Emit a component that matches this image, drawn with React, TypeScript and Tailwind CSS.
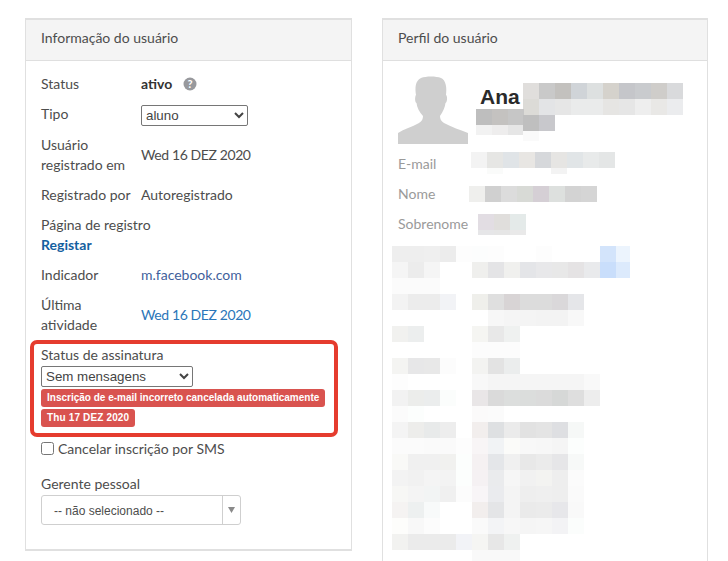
import type { ReactNode } from 'react';

type PixRow = { x: number; y: number; h?: number; w?: number; c: string[] };

// blurred-out user data, drawn as blocks of 16px
function Pix({ rows, width, height, className }: { rows: PixRow[]; width: number; height: number; className?: string }) {
  return (
    <svg width={width} height={height} className={className} shapeRendering="crispEdges">
      {rows.map((r, i) =>
        r.c.map((c, j) =>
          c ? <rect key={`${i}-${j}`} x={r.x + j * (r.w ?? 16)} y={r.y} width={r.w ?? 16} height={r.h ?? 16} fill={c} /> : null,
        ),
      )}
    </svg>
  );
}

const nameRows: PixRow[] = [
  { x: 47, y: 0, c: ['#e0dedc', '#c9c9c9', '#c3c1be', '#d0d4d8', '#dde0e0', '#d5d2cc', '#c5c6ca', '#c9cbce', '#cfcdca', '#d9dadc'] },
  { x: 47, y: 16, c: ['#dcdbd7', '#e3e4e6', '#e6e6e6', '#eaebeb', '#eaebeb', '#e6e5e3', '#e6e6e6', '#eeeeee', '#e9e8e6', '#ebecee'] },
  { x: 0, y: 26, c: ['#bebebe', '#c4c2c0', '#c6c6c6'] },
  { x: 0, y: 42, h: 10, c: ['#f2f2f2', '#eeeded', '#e6e6e6'] },
  { x: 47, y: 32, c: ['#bfbfbf', '#c8c8cc'] },
  { x: 47, y: 48, h: 10, c: ['#fafafa'] },
];

const lowerRows: PixRow[] = [
  { x: 0, y: 0, c: ['#eeeeee', '#eeeeee', '#efefef', '#ececec', '#fdfdfd', '#fcfdfd', '#fdfdfd', '', '', '#fdfdfd', '', '', '', '#d3e4fb', '#ecf4fd'] },
  { x: 0, y: 16, c: ['#f5f5f5', '#ececec', '#f5f5f5', '', '', '#efefed', '#e4e4e6', '#f0f0ee', '#e4e5e8', '#e8e8ea', '#e8e8e8', '#e5e3e4', '#e9eaec', '#c9defb', '#dceafc'] },
  { x: 0, y: 32, c: ['#fbfbfb', '#fbfbfb', '#fbfbfb'] },
  { x: 0, y: 48, c: ['#f3f3f3', '#ececec', '#ececec', '#f2f3f6', '', '#efefeb', '#dfdfdf', '#d8d4d5', '#dcdcdc', '#dcdcdc', '#dad8da', '#e5e6e9'] },
  { x: 0, y: 64, c: ['', '', '', '', '', '', '#f7f7f7', '#f5f5f5', '#f4f4f4', '#f3f3f3', '#f3f3f3', '#f8f8f8'] },
  { x: 0, y: 80, c: ['#f1f1ef', '#eceeee', '', '', '', '#f5f5f2', '#e8e8e8', '#eff1f0'] },
  { x: 0, y: 96, c: ['', '', '', '', '', '#fcfcfc', '#fcfcfc', '#fcfcfc'] },
  { x: 0, y: 112, c: ['#f4f4f2', '#e7e7e8', '#e8e8e8', '#fcfcfc', '', '#f3f3f1', '#e3e3e3', '#ebeded'] },
  { x: 0, y: 128, c: ['#fdfdfd', '', '', '', '', '#f8f8f8', '#f5f5f5', '#f5f5f5', '#f5f5f5', '#f5f5f5', '#f5f5f5', '#f5f5f5', '#f9f9f9'] },
  { x: 0, y: 144, c: ['#f2f2f2', '#ecedeb', '#ebeded', '#fbfdfc', '', '#e9e6e7', '#dadada', '#dcdedd', '#dbdddc', '#dbdbdb', '#d6d8d7', '#dedede', '#ededed'] },
  { x: 0, y: 160, c: ['#fbfbfb', '#fcfefd', '', '', '', '#fbfafa', '#fbfbfb'] },
  { x: 0, y: 176, c: ['#f4f4f4', '#ededeb', '#e8eaea', '#ededed', '', '#f2eeed', '#dee0e2', '#ebebeb', '#e2e2e2', '#e4e4e4', '#dedfe2', '#f6f8f7'] },
  { x: 0, y: 192, c: ['#fbfbfb', '#fbfbfb', '#fafafa', '#fafafa', '#fdfdfd', '#f8f5f6', '#f1f3f5', '#fbfbf9', '#f8f8f8', '#f7f7f7', '#f5f5f5', '#fcfefd'] },
  { x: 0, y: 208, c: ['#f9f9f7', '#f0f0f0', '#f0f0f0', '#f1f1ef', '#fcfefd', '#f5f1f2', '#e4e6e9', '#f0f0f0', '#e8e8e8', '#ebebeb', '#e6e6e8', '#f7f9f8'] },
  { x: 0, y: 224, c: ['#f3f3f3', '#f1f1f1', '#f4f4f4', '#f3f3f3', '#fcfefd', '#f5f1f3', '#eaebed', '#f6f6f6', '#f1f1f1', '#f3f3f1', '#eeeeee', '#fbfbfb'] },
  { x: 0, y: 240, c: ['#f7f7f5', '#f4f4f4', '#f2f4f4', '#f0f0f0', '#fcfcfc', '#f8f5f7', '#eaebee', '#f4f4f4', '#eeeeee', '#efefef', '#eeeeee', '#fafafa'] },
  { x: 0, y: 256, c: ['#f5f3f2', '#edf0f0', '#f8fafa', '', '', '#f2eeed', '#e4e5e7', '#f4f4f4', '#eaeaea', '#ebebeb', '#e7e7ea', '#f9f9f9'] },
  { x: 0, y: 272, c: ['#fdfdfb', '#f8f8f8', '#fcfcfc', '', '', '#fafafa', '#f3f4f6', '#f7f7f7', '#f5f5f5', '#f6f6f6', '#f3f3f5', '#fbfdfc'] },
  { x: 0, y: 288, c: ['#f2f2f0', '#ebebeb', '#ebebeb', '#ebebeb', '#f2f3f7', '#f5f5f3', '#e7e7e7', '#eff1f0'] },
  { x: 0, y: 304, c: ['', '', '', '', '', '#f9f9f9', '#f9f9f9', '#f9f9f9'] },
];

function Row({ label, children, className = '' }: { label: ReactNode; children: ReactNode; className?: string }) {
  return (
    <div className={`flex items-center ${className}`}>
      <div className="w-[100px] shrink-0">{label}</div>
      <div>{children}</div>
    </div>
  );
}

function PanelHead({ title }: { title: string }) {
  return <div className="h-[41px] border-b border-[#dfdfdf] bg-[#f4f4f4] pl-[15px] leading-[35px]">{title}</div>;
}

export default function App() {
  return (
    <div className="flex h-[561px] items-start gap-[30px] overflow-hidden bg-white pl-[25px] pt-[18px] font-['Lato','Open_Sans',sans-serif] text-[14px] leading-[20px] text-[#4d4d4d]">
      <section className="h-[533px] w-[327px] border-2 border-[#e0e0e0] border-x-[1.5px]">
        <PanelHead title="Informação do usuário" />
        <div className="flex flex-col px-[15px] pt-[13px]">
          <Row label="Status" className="h-[20px]">
            <span className="flex items-center gap-[11px] font-bold text-[#333]">
              ativo
              <svg width="14" height="14" viewBox="0 0 14 14">
                <circle cx="7" cy="7" r="6.500" fill="#98999d" />
                <text x="7" y="11" textAnchor="middle" fontSize="11" fontWeight="700" fill="#fff">?</text>
              </svg>
            </span>
          </Row>
          <Row label="Tipo" className="mt-[10px] h-[20px]">
            <select className="mt-[2px] h-[21px] w-[107px] rounded-[2px] border border-[#767676] bg-white font-['Liberation_Sans',sans-serif] text-[13.333px] text-[#444] [appearance:auto]">
              <option>aluno</option>
            </select>
          </Row>
          <Row label={<>Usuário<br />registrado em</>} className="mt-[11px]"><span className="tracking-[-0.4px]">Wed 16 DEZ 2020</span></Row>
          <Row label="Registrado por" className="mt-[10px]">Autoregistrado</Row>
          <div className="mt-[10px]">Página de registro</div>
          <a className="font-bold text-[#14609f]">Registar</a>
          <Row label="Indicador" className="mt-[10px]"><a className="text-[#3f5f9c]">m.facebook.com</a></Row>
          <Row label={<>Última<br />atividade</>} className="mt-[10px]"><a className="tracking-[-0.4px] text-[#2b76b9]">Wed 16 DEZ 2020</a></Row>
          <div className="relative mt-[10px]">
            <div>Status de assinatura</div>
            <select className="mt-[1px] block h-[21px] w-[152px] rounded-[2px] border border-[#767676] bg-white font-['Liberation_Sans',sans-serif] text-[13.333px] text-[#444] [appearance:auto]">
              <option>Sem mensagens</option>
            </select>
            <div className="mt-[2px] flex flex-col items-start gap-[2px] font-['Liberation_Sans',sans-serif] text-[10px] font-bold leading-[18px] text-white">
              <span className="whitespace-nowrap rounded-[3px] bg-[#d9534f] px-[6px]">Inscrição de e-mail incorreto cancelada automaticamente</span>
              <span className="whitespace-nowrap rounded-[3px] bg-[#d9534f] px-[6px] tracking-[0.15px]">Thu 17 DEZ 2020</span>
            </div>
            <div className="pointer-events-none absolute -left-[11px] -top-[5px] h-[97px] w-[308px] rounded-[7px] border-4 border-[#e53c2e]" />
          </div>
          <label className="mt-[12px] flex h-[20px] items-center">
            <input type="checkbox" className="-mt-[2px] h-[13px] w-[13px] [appearance:auto]" />
            <span className="ml-[4px]">Cancelar inscrição por SMS</span>
          </label>
          <div className="mt-[15px]">Gerente pessoal</div>
          <div className="mt-[1px] flex h-[30px] w-[200px] items-center rounded-[3px] border border-[#cfcfcf] font-['Liberation_Sans',sans-serif] text-[12px]">
            <span className="flex-1 pl-[12px] pt-px">-- não selecionado --</span>
            <span className="flex h-full w-[18px] items-center justify-center border-l border-[#cfcfcf] pr-[1px]">
              <svg width="7" height="6" viewBox="0 0 7 6"><path d="M0 0h7L3.500 6z" fill="#8a8a8a" /></svg>
            </span>
          </div>
        </div>
      </section>

      <section className="h-[600px] w-[326px] border-2 border-[#e0e0e0] border-x-[1.5px]">
        <PanelHead title="Perfil do usuário" />
        <div className="flex flex-col pl-[15px] text-[#9a9a9a]">
          <div className="flex pt-[15px]">
            <svg width="70" height="68" viewBox="0 0 70 68" className="shrink-0">
              <path
                d="M0 68V57C6 53 14 51 21 47C24 45 25 43 25 40C21 36 19 31 18.500 27C16.500 26 17 20 18 19C17 12 17 5 23 2C28 0 38 0 43 2C48 4 49 12 48 19C49.500 20 49.500 26 47.500 27C47 31 45 36 42 40C42 43 43 45 46 47C53 51 63 54 70 57V68Z"
                fill="#cfcfcf"
              />
            </svg>
            <div className="relative ml-[8px] h-[68px] flex-1">
              <div className="pl-[4px] pt-[9px] font-['Liberation_Sans',sans-serif] text-[21px] font-bold leading-[24px] text-[#2a2a2a]">Ana</div>
              <Pix rows={nameRows} width={208} height={58} className="absolute left-0 top-[7px]" />
            </div>
          </div>
          <div className="mt-[10px] flex h-[20px] items-center">
            <span className="w-[73px]">E-mail</span>
            <Pix rows={[{ x: 0, y: 0, c: ['#f3f3f3', '#e6e6e4', '#e0e4e7', '#e8e6e3', '#d6d8db', '#e6e5e3', '#e1e5e7', '#e8eaea', '#e4e6e6'] }, { x: 16, y: 16, h: 6, c: ['#fafbfa', '', '', '', '#f3f3f3'] }]} width={144} height={22} className="-mt-[2px]" />
          </div>
          <div className="mt-[10px] flex h-[20px] items-center">
            <span className="w-[71px]">Nome</span>
            <Pix rows={[{ x: 0, y: 0, c: ['#efefed', '#d0d0d0', '#dcdcdc', '#d8dad6', '#d5cfd5', '#dde0de', '#d3d3d3', '#d5d5d5'] }]} width={128} height={16} />
          </div>
          <div className="mt-[10px] flex h-[20px] items-center">
            <span className="w-[80px]">Sobrenome</span>
            <Pix rows={[{ x: 0, y: 0, c: ['#e2dde3', '#e0dedc', '#e4eae9'] }, { x: 0, y: 16, h: 5, c: ['#e6e6e8', '#e6e6e6', '#e9e9e9'] }]} width={48} height={21} className="mt-[1px]" />
          </div>
          <Pix rows={lowerRows} width={238} height={315} className="-ml-[6px] mt-[12px]" />
        </div>
      </section>
    </div>
  );
}
